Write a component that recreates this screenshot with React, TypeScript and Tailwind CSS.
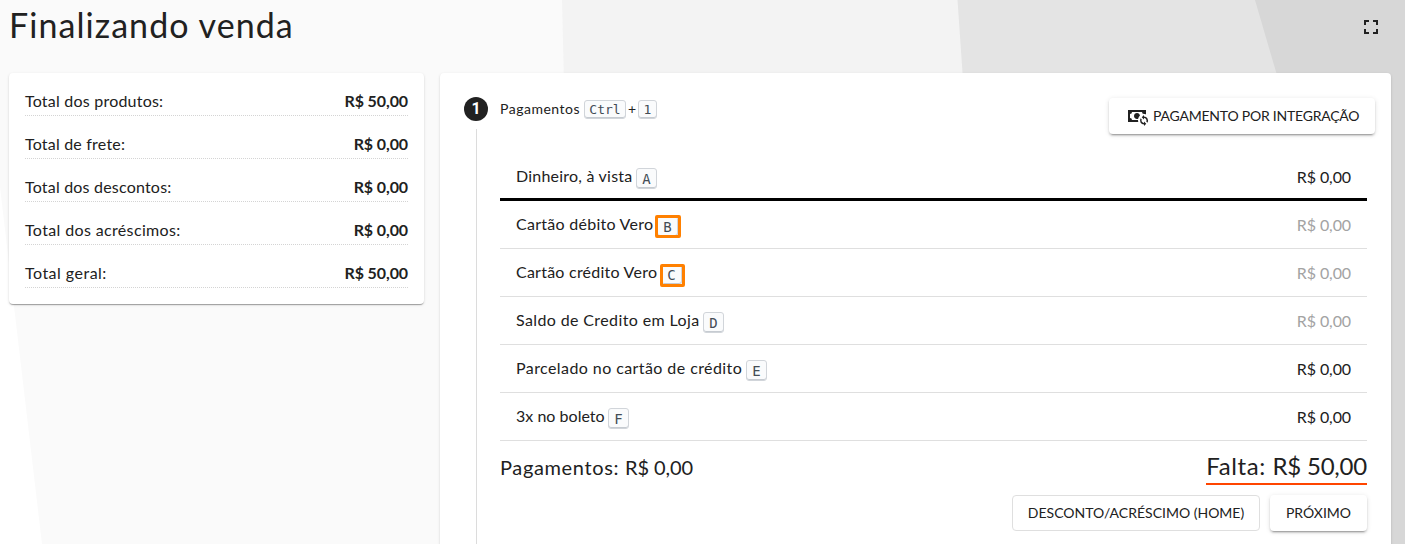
import React from "react";

const CARD_SHADOW =
  "shadow-[0_2px_1px_-1px_rgba(0,0,0,0.2),0_1px_1px_0_rgba(0,0,0,0.14),0_1px_3px_0_rgba(0,0,0,0.12)]";
const RAISED_SHADOW =
  "shadow-[0_3px_1px_-2px_rgba(0,0,0,0.2),0_2px_2px_0_rgba(0,0,0,0.14),0_1px_5px_0_rgba(0,0,0,0.12)]";

const totals = [
  { label: "Total dos produtos:", value: "R$ 50,00", spacing: "tracking-[0.22px]" },
  { label: "Total de frete:", value: "R$ 0,00", spacing: "tracking-[0.2px]" },
  { label: "Total dos descontos:", value: "R$ 0,00", spacing: "tracking-[0.2px]" },
  { label: "Total dos acréscimos:", value: "R$ 0,00", spacing: "tracking-[0.36px]" },
  { label: "Total geral:", value: "R$ 50,00", spacing: "tracking-[0.48px]" },
];

type Method = {
  label: string;
  hotkey: string;
  spacing: string;
  active?: boolean;
  muted?: boolean;
  highlight?: string;
};

const methods: Method[] = [
  { label: "Dinheiro, à vista", hotkey: "A", spacing: "tracking-[0.22px] w-[120px]", active: true },
  {
    label: "Cartão débito Vero",
    hotkey: "B",
    spacing: "tracking-[0.27px] w-[141px]",
    muted: true,
    highlight: "-left-[3px] -top-[2px] h-[23px] w-[26px]",
  },
  {
    label: "Cartão crédito Vero",
    hotkey: "C",
    spacing: "tracking-[0.24px] w-[145px]",
    muted: true,
    highlight: "-left-[2px] -top-[1px] h-[23px] w-[25px]",
  },
  { label: "Saldo de Credito em Loja", hotkey: "D", spacing: "tracking-[0.38px] w-[187px]", muted: true },
  { label: "Parcelado no cartão de crédito", hotkey: "E", spacing: "tracking-[0.42px] w-[230px]" },
  { label: "3x no boleto", hotkey: "F", spacing: "tracking-[0.02px] w-[92px]" },
];

function Kbd({ children, className = "" }: { children: React.ReactNode; className?: string }) {
  return (
    <kbd
      className={`relative box-border flex shrink-0 items-center justify-center rounded-[3px] border border-[#d1d5da] bg-[#fafbfc] font-['DejaVu_Sans_Mono',monospace] leading-none text-[#444d56] shadow-[inset_0_-1px_0_#c6cbd1] ${className}`}
    >
      {children}
    </kbd>
  );
}

function CashSyncIcon() {
  return (
    <svg viewBox="0 0 24 24" className="size-6 shrink-0 fill-current">
      <path d="M3 6v12h10.3a6.4 6.4 0 0 1-.3-2H7a2 2 0 0 0-2-2v-4a2 2 0 0 0 2-2h10a2 2 0 0 0 2 2v.06c.67 0 1.34.12 2 .34V6H3m9 3c-1.7.03-3 1.3-3 3s1.3 2.94 3 3c.38 0 .77-.08 1.14-.23.27-1.1.86-2.14 1.83-3.16C14.85 10.28 13.59 8.97 12 9" />
      <path d="M19 11v1.5a4 4 0 0 1 3.36 6.17l-1.09-1.09A2.5 2.5 0 0 0 19 14v1.5l-2.25-2.25L19 11m0 11v-1.5a4 4 0 0 1-3.36-6.17l1.09 1.09A2.5 2.5 0 0 0 19 19v-1.5l2.25 2.25L19 22" />
    </svg>
  );
}

function Backdrop() {
  return (
    <svg
      viewBox="0 0 1405 544"
      preserveAspectRatio="none"
      className="absolute inset-0 -z-10 h-full w-full"
    >
      <rect width="1405" height="544" fill="#ffffff" />
      <path d="M-22 0H1405V544H42Z" fill="#fafafa" />
      <path d="M562 0H1405V544H575Z" fill="#f3f3f3" />
      <path d="M957.500 0H1405V544H995Z" fill="#e4e4e4" />
      <path d="M1255 0H1405V544H1414Z" fill="#d7d7d7" />
      <path d="M1391 70H1405V544H1391Z" fill="#d7d7d7" />
    </svg>
  );
}

export default function App() {
  return (
    <div className="relative isolate flex h-[544px] w-full flex-col overflow-hidden font-[Lato,sans-serif] text-[#212121]">
      <Backdrop />
      <header className="flex h-[73px] shrink-0 items-start justify-between pl-[9px] pr-[22px]">
        <h1 className="pt-px text-[34px] leading-[48px] tracking-[1.06px]">Finalizando venda</h1>
        <button className="mt-[15px]" aria-label="Tela cheia">
          <svg viewBox="0 0 24 24" className="size-6 fill-current">
            <path d="M7 14H5v5h5v-2H7v-3zm-2-4h2V7h3V5H5v5zm12 7h-3v2h5v-5h-2v3zM14 5v2h3v3h2V5h-5z" />
          </svg>
        </button>
      </header>

      <main className="flex min-h-0 flex-1 items-start gap-4 pl-[9px] pr-[14px]">
        <section className={`flex w-[415px] shrink-0 flex-col gap-4 rounded bg-white p-4 ${CARD_SHADOW}`}>
          {totals.map((t) => (
            <div
              key={t.label}
              className="flex justify-between border-b border-dotted border-[#d4d4d4] pb-[2px] leading-6"
            >
              <span className={t.spacing}>{t.label}</span>
              <strong className="font-bold tracking-[-0.1px]">{t.value}</strong>
            </div>
          ))}
        </section>

        <section
          className={`flex h-[520px] min-w-0 flex-1 gap-3 rounded bg-white pl-6 pr-4 pt-6 ${CARD_SHADOW}`}
        >
          <div className="flex w-6 shrink-0 flex-col items-center gap-2">
            <span className="flex size-6 shrink-0 items-center justify-center rounded-full bg-[#212121] font-[Roboto,sans-serif] text-base font-bold text-white">
              1
            </span>
            <span className="w-px flex-1 bg-[#dcdcdc]" />
          </div>

          <div className="flex min-w-0 flex-1 flex-col">
            <div className="flex h-14 items-start justify-between">
              <div className="flex pt-[3px] text-sm leading-[18px]">
                <span className="w-[84px] tracking-[0.5px]">Pagamentos</span>
                <Kbd className="h-[19px] w-[42px] text-[13px]">Ctrl</Kbd>
                <span className="w-3 text-center">+</span>
                <Kbd className="h-[19px] w-[19px] text-[13px]">1</Kbd>
              </div>
              <button
                className={`mt-px flex h-9 w-[266px] items-center rounded bg-white pl-4 text-sm tracking-[-0.22px] ${RAISED_SHADOW}`}
              >
                <CashSyncIcon />
                <span className="ml-1 whitespace-nowrap">PAGAMENTO POR INTEGRAÇÃO</span>
              </button>
            </div>

            <div className="mr-2 flex flex-col">
              {methods.map((m) => (
                <div
                  key={m.hotkey}
                  className={`flex h-12 items-start px-4 ${
                    m.active ? "border-b-[3px] border-black" : "border-b border-[#dfdfdf]"
                  }`}
                >
                  <span className={`mt-[11px] whitespace-nowrap leading-6 ${m.spacing}`}>{m.label}</span>
                  <Kbd className="mt-[15px] size-[21px] pt-px text-[14px]">
                    {m.hotkey}
                    {m.highlight && (
                      <span
                        className={`absolute rounded-[2px] border-[3px] border-[#ff8000] ${m.highlight}`}
                      />
                    )}
                  </Kbd>
                  <span
                    className={`ml-auto mt-3 leading-6 tracking-[-0.1px] ${m.muted ? "text-[#a3a3a3]" : ""}`}
                  >
                    R$ 0,00
                  </span>
                </div>
              ))}

              <div className="flex items-start justify-between pt-[9px]">
                <span className="mt-px text-xl leading-8">
                  <span className="tracking-[0.64px]">Pagamentos: </span>
                  <span className="tracking-[-0.06px]">R$ 0,00</span>
                </span>
                <span className="border-b-2 border-[#ff4500] pb-px text-2xl leading-8">
                  <span className="tracking-[0.6px]">Falta: </span>
                  <span className="tracking-[-0.22px]">R$ 50,00</span>
                </span>
              </div>

              <div className="mt-[10px] flex justify-end gap-[10px] text-sm">
                <button className="h-9 w-[248px] whitespace-nowrap rounded border border-[#dfdfdf] bg-white">
                  DESCONTO/ACRÉSCIMO (HOME)
                </button>
                <button className={`h-9 w-[97px] rounded bg-white ${RAISED_SHADOW}`}>PRÓXIMO</button>
              </div>
            </div>
          </div>
        </section>
      </main>
    </div>
  );
}
